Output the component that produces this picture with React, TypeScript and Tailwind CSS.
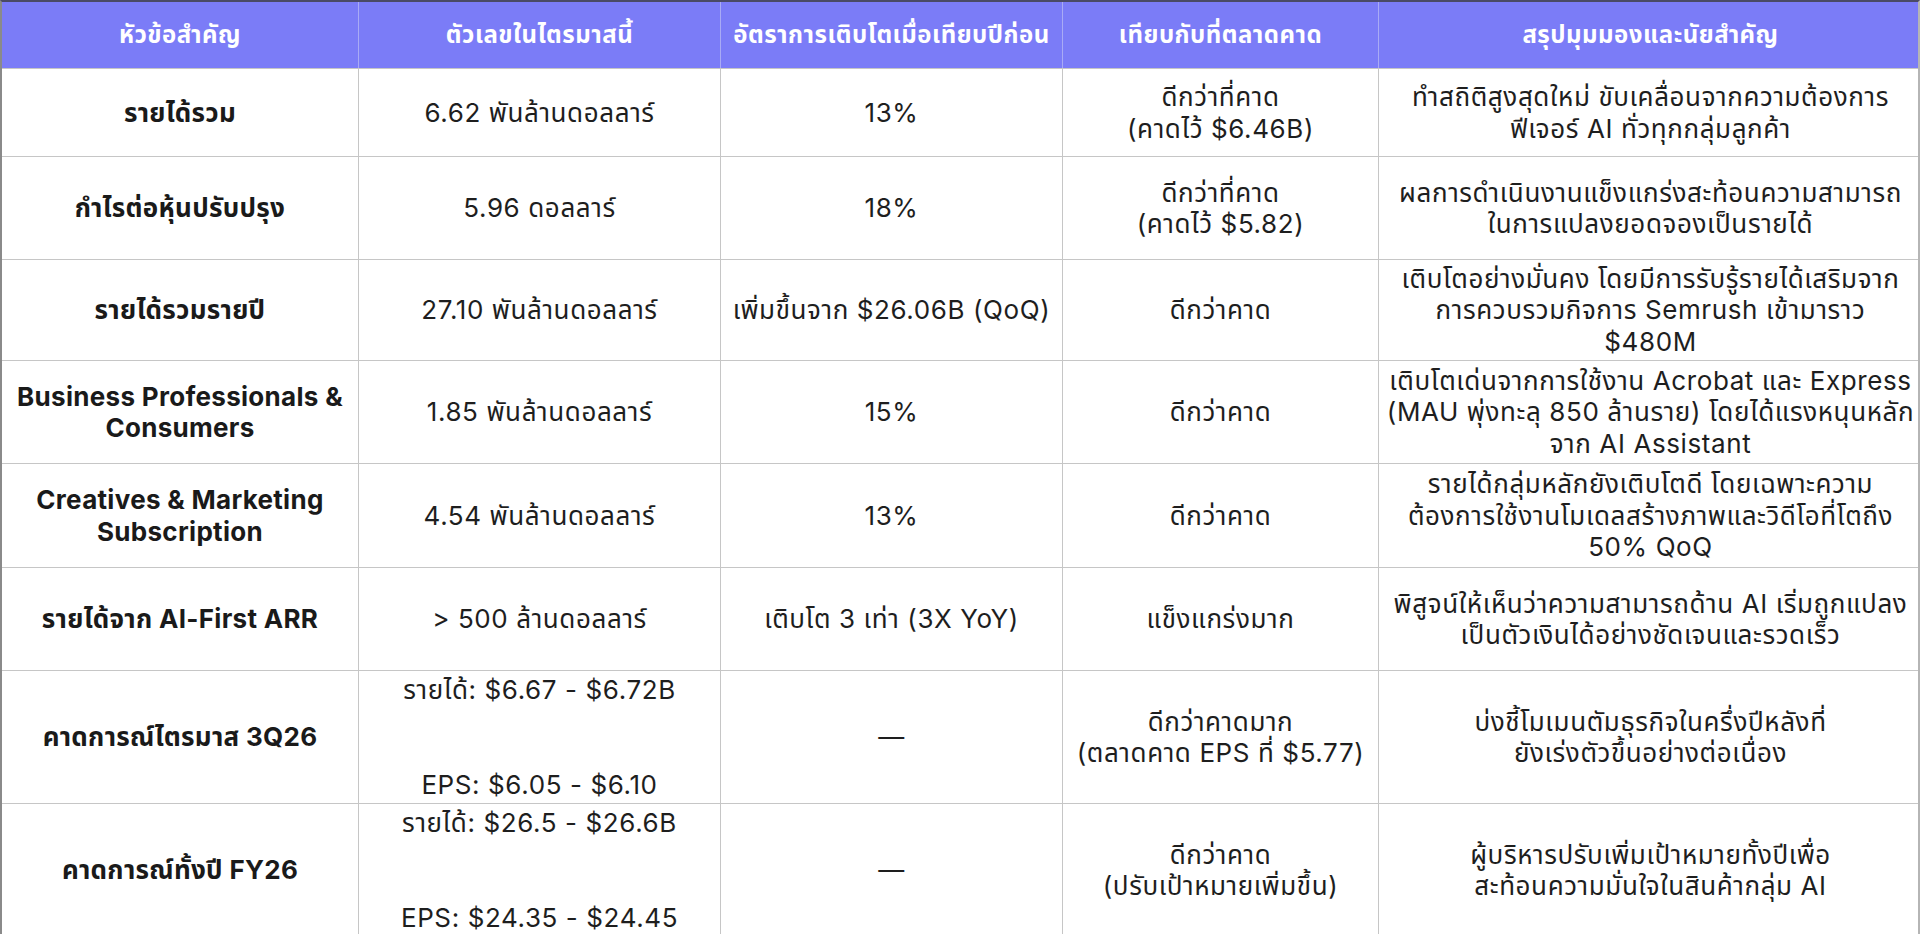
import React from "react";

const cols = ["w-[357px]", "w-[362px]", "w-[342px]", "w-[316px]", "w-[543px]"];

const headers = [
  "หัวข้อสำคัญ",
  "ตัวเลขในไตรมาสนี้",
  "อัตราการเติบโตเมื่อเทียบปีก่อน",
  "เทียบกับที่ตลาดคาด",
  "สรุปมุมมองและนัยสำคัญ",
];

type Row = { h: string; cells: string[] };

const rows: Row[] = [
  {
    h: "h-[88px]",
    cells: [
      "รายได้รวม",
      "6.62 พันล้านดอลลาร์",
      "13%",
      "ดีกว่าที่คาด\n(คาดไว้ $6.46B)",
      "ทำสถิติสูงสุดใหม่ ขับเคลื่อนจากความต้องการ\nฟีเจอร์ AI ทั่วทุกกลุ่มลูกค้า",
    ],
  },
  {
    h: "h-[103px]",
    cells: [
      "กำไรต่อหุ้นปรับปรุง",
      "5.96 ดอลลาร์",
      "18%",
      "ดีกว่าที่คาด\n(คาดไว้ $5.82)",
      "ผลการดำเนินงานแข็งแกร่งสะท้อนความสามารถ\nในการแปลงยอดจองเป็นรายได้",
    ],
  },
  {
    h: "h-[101px]",
    cells: [
      "รายได้รวมรายปี",
      "27.10 พันล้านดอลลาร์",
      "เพิ่มขึ้นจาก $26.06B (QoQ)",
      "ดีกว่าคาด",
      "เติบโตอย่างมั่นคง โดยมีการรับรู้รายได้เสริมจาก\nการควบรวมกิจการ Semrush เข้ามาราว\n$480M",
    ],
  },
  {
    h: "h-[103px]",
    cells: [
      "Business Professionals &\nConsumers",
      "1.85 พันล้านดอลลาร์",
      "15%",
      "ดีกว่าคาด",
      "เติบโตเด่นจากการใช้งาน Acrobat และ Express\n(MAU พุ่งทะลุ 850 ล้านราย) โดยได้แรงหนุนหลัก\nจาก AI Assistant",
    ],
  },
  {
    h: "h-[104px]",
    cells: [
      "Creatives & Marketing\nSubscription",
      "4.54 พันล้านดอลลาร์",
      "13%",
      "ดีกว่าคาด",
      "รายได้กลุ่มหลักยังเติบโตดี โดยเฉพาะความ\nต้องการใช้งานโมเดลสร้างภาพและวิดีโอที่โตถึง\n50% QoQ",
    ],
  },
  {
    h: "h-[103px]",
    cells: [
      "รายได้จาก AI-First ARR",
      "> 500 ล้านดอลลาร์",
      "เติบโต 3 เท่า (3X YoY)",
      "แข็งแกร่งมาก",
      "พิสูจน์ให้เห็นว่าความสามารถด้าน AI เริ่มถูกแปลง\nเป็นตัวเงินได้อย่างชัดเจนและรวดเร็ว",
    ],
  },
  {
    h: "h-[133px]",
    cells: [
      "คาดการณ์ไตรมาส 3Q26",
      "รายได้: $6.67 - $6.72B\n\n\nEPS: $6.05 - $6.10",
      "—",
      "ดีกว่าคาดมาก\n(ตลาดคาด EPS ที่ $5.77)",
      "บ่งชี้โมเมนตัมธุรกิจในครึ่งปีหลังที่\nยังเร่งตัวขึ้นอย่างต่อเนื่อง",
    ],
  },
  {
    h: "h-[133px]",
    cells: [
      "คาดการณ์ทั้งปี FY26",
      "รายได้: $26.5 - $26.6B\n\n\nEPS: $24.35 - $24.45",
      "—",
      "ดีกว่าคาด\n(ปรับเป้าหมายเพิ่มขึ้น)",
      "ผู้บริหารปรับเพิ่มเป้าหมายทั้งปีเพื่อ\nสะท้อนความมั่นใจในสินค้ากลุ่ม AI",
    ],
  },
];

export default function App() {
  return (
    <div
      className="w-[1920px] h-[934px] overflow-hidden bg-white text-[#1e1e1e]"
      style={{ fontFamily: 'Inter, "Noto Sans Thai", "Noto Sans Thai UI", "Noto Sans", "DejaVu Sans", sans-serif' }}
    >
      <div className="border-l-2 border-r-2 border-t-2 border-l-[#8a8a8a] border-r-[#b5b5b5] border-t-[#4a4a66]">
        <div className="flex h-[66px] bg-[#7b7cf7] text-white">
          {headers.map((t, i) => (
            <div
              key={i}
              className={`${cols[i]} shrink-0 flex items-center justify-center text-[24px] tracking-[0.5px] font-bold leading-none ${
                i < 4 ? "border-r border-r-[#a9abf5]" : ""
              }`}
            >
              {t}
            </div>
          ))}
        </div>
        {rows.map((r, ri) => (
          <div key={ri} className={`flex ${r.h} border-t border-t-[#c6c6c6]`}>
            {r.cells.map((c, ci) => (
              <div
                key={ci}
                className={`${cols[ci]} shrink-0 flex items-center justify-center text-center whitespace-pre-line leading-[31.5px] ${
                  ci === 0
                    ? "font-bold text-[26px] tracking-[0.3px] text-[#1a1a1a]"
                    : "text-[26px] tracking-[0.6px] font-normal"
                } ${ci < 4 ? "border-r border-r-[#c6c6c6]" : ""}`}
              >
                {c}
              </div>
            ))}
          </div>
        ))}
      </div>
    </div>
  );
}
